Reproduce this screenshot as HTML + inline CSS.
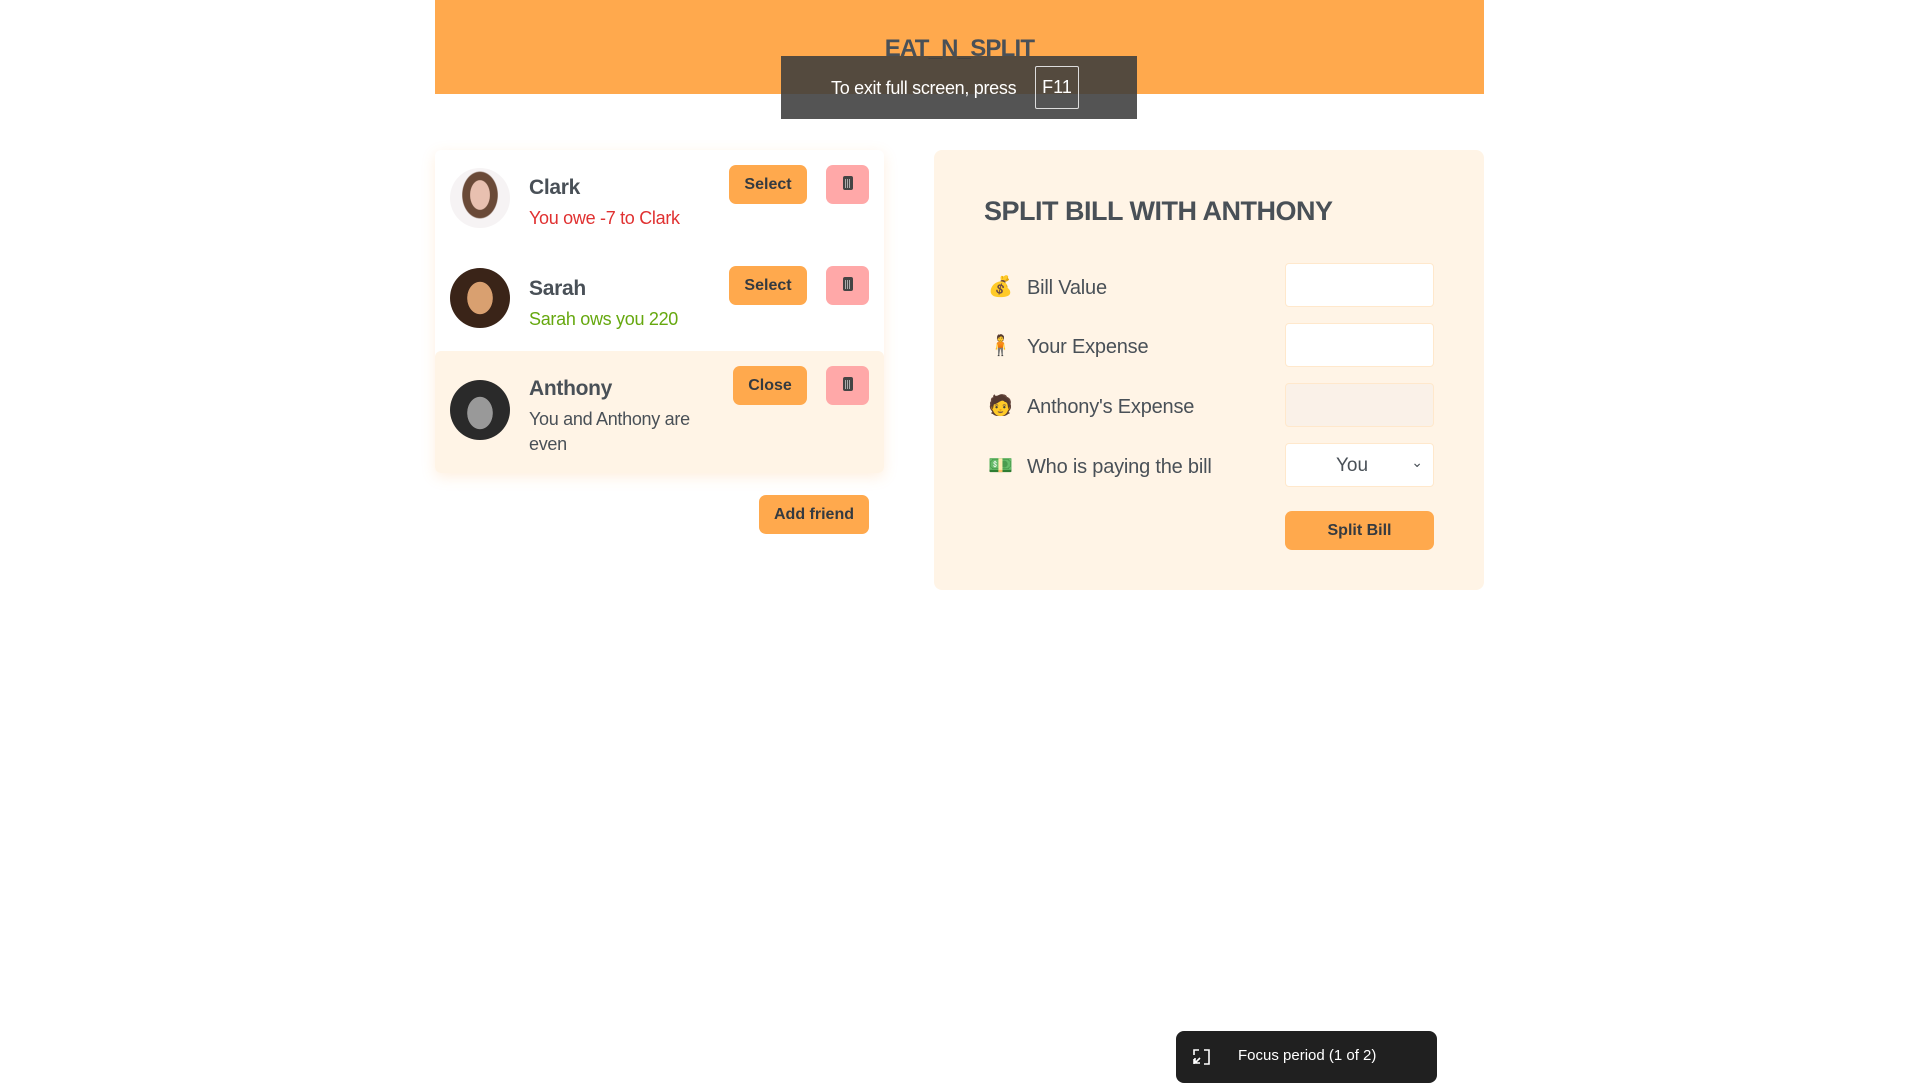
<!DOCTYPE html>
<html><head><meta charset="utf-8"><style>
*{box-sizing:border-box;margin:0;padding:0}
body{width:1917px;height:1079px;background:#fff;position:relative;overflow:hidden;font-family:"Liberation Sans","DejaVu Sans",sans-serif;color:#495057}
.a{position:absolute}
.hdr{left:435px;top:0;width:1049px;height:94px;background:#ffa94d}
.hdr h1{position:absolute;left:0;right:0;top:35px;text-align:center;font-size:24px;font-weight:bold;letter-spacing:-0.8px;color:#495057}
.toast{left:781px;top:56px;width:356px;height:63px;background:rgba(60,60,60,0.88);color:#fff;font-size:18px}
.toast span{position:absolute;left:50px;top:22px;letter-spacing:-0.3px}
.toast b{position:absolute;left:254px;top:10px;width:44px;height:43px;border:1.5px solid #ddd;border-radius:2px;font-weight:normal;text-align:center;line-height:40px;font-size:18px}
.list{left:435px;top:150px;width:449px;height:323px;box-shadow:0 4px 14px rgba(255,169,77,0.18);border-radius:6px}
.item{position:absolute;left:0;width:449px}
.av{position:absolute;width:60px;height:60px;border-radius:50%;left:15px}
.nm{position:absolute;left:94px;font-size:21px;font-weight:bold;letter-spacing:-0.3px}
.ds{position:absolute;left:94px;font-size:18px;line-height:25px;letter-spacing:-0.3px}
.btn{position:absolute;background:#ffa94d;border-radius:7px;font-weight:bold;font-size:16px;color:#343a40;text-align:center;line-height:39px;height:39px}
.del{position:absolute;background:#ffa8a8;border-radius:7px;width:43px;height:39px;left:391px}
.del i{position:absolute;left:17px;top:11px;width:10px;height:14px;background:#444;border-radius:2px}
.del i:after{content:"";position:absolute;left:2px;top:3px;width:6px;height:9px;background:repeating-linear-gradient(90deg,#aaa 0 1px,#444 1px 2px)}
.panel{left:934px;top:150px;width:550px;height:440px;background:#fff4e6;border-radius:8px}
.panel h2{position:absolute;left:50px;top:46px;font-size:27px;font-weight:bold;letter-spacing:-0.5px}
.lab{position:absolute;left:93px;font-size:20px;letter-spacing:-0.2px}
.em{position:absolute;left:54px;font-size:20px;width:24px;text-align:center}
.inp{position:absolute;left:351px;width:149px;height:44px;background:#fff;border:1px solid #ffe8cc;border-radius:4px}
.focus{left:1176px;top:1031px;width:261px;height:52px;background:#202020;border-radius:8px;color:#fff;font-size:15px}
</style></head><body>
<div class="a hdr"><h1>EAT_N_SPLIT</h1></div>
<div class="a toast"><span>To exit full screen, press</span><b>F11</b></div>

<div class="a list">
 <div class="item" style="top:0;height:101px">
  <div class="av" style="top:18px;background:radial-gradient(ellipse 20% 30% at 50% 45%,#e8c0b0 0 80%,transparent 85%),radial-gradient(ellipse 32% 42% at 50% 45%,#6a4a38 0 90%,transparent 95%),#f6f3f4"></div>
  <div class="nm" style="top:26px">Clark</div>
  <div class="ds" style="top:56px;color:#e03131">You owe -7 to Clark</div>
  <div class="btn" style="left:294px;top:15px;width:78px">Select</div>
  <div class="del" style="top:15px"><i></i></div>
 </div>
 <div class="item" style="top:101px;height:100px">
  <div class="av" style="top:17px;background:radial-gradient(ellipse 30% 38% at 50% 50%,#d9a070 0 70%,#3a2418 72%),#6b4a3a"></div>
  <div class="nm" style="top:26px">Sarah</div>
  <div class="ds" style="top:56px;color:#66a80f">Sarah ows you 220</div>
  <div class="btn" style="left:294px;top:15px;width:78px">Select</div>
  <div class="del" style="top:15px"><i></i></div>
 </div>
 <div class="item" style="top:201px;height:122px;background:#fff4e6;border-radius:6px">
  <div class="av" style="top:29px;background:radial-gradient(ellipse 30% 38% at 50% 55%,#999 0 70%,#2a2a2a 72%),#1a1a1a"></div>
  <div class="nm" style="top:26px">Anthony</div>
  <div class="ds" style="top:56px">You and Anthony are<br>even</div>
  <div class="btn" style="left:298px;top:15px;width:74px">Close</div>
  <div class="del" style="top:15px"><i></i></div>
 </div>
</div>
<div class="btn" style="left:759px;top:495px;width:110px">Add friend</div>

<div class="a panel">
 <h2>SPLIT BILL WITH ANTHONY</h2>
 <div class="em" style="top:124px">💰</div><div class="lab" style="top:127px">Bill Value</div>
 <div class="inp" style="top:113px"></div>
 <div class="em" style="top:183px">🧍</div><div class="lab" style="top:186px">Your Expense</div>
 <div class="inp" style="top:173px"></div>
 <div class="em" style="top:243px">🧑</div><div class="lab" style="top:246px">Anthony's Expense</div>
 <div class="inp" style="top:233px;background:#faf1e8"></div>
 <div class="em" style="top:303px">💵</div><div class="lab" style="top:306px">Who is paying the bill</div>
 <div class="inp" style="top:293px"><span style="position:absolute;left:50px;top:11px;font-size:19px">You</span><span style="position:absolute;right:10px;top:10px;font-size:14px">&#8964;</span></div>
 <div class="btn" style="left:351px;top:361px;width:149px;height:39px">Split Bill</div>
</div>

<div class="a focus">
 <svg class="a" style="left:16px;top:16px" width="20" height="20" viewBox="0 0 20 20" fill="none" stroke="#fff" stroke-width="1.6"><path d="M2 8V3h5M12 3h5v14h-5M2 12v5M3 16l5-5M3 11v5h5"/></svg>
 <span class="a" style="left:62px;top:16px">Focus period (1 of 2)</span>
</div>
</body></html>
